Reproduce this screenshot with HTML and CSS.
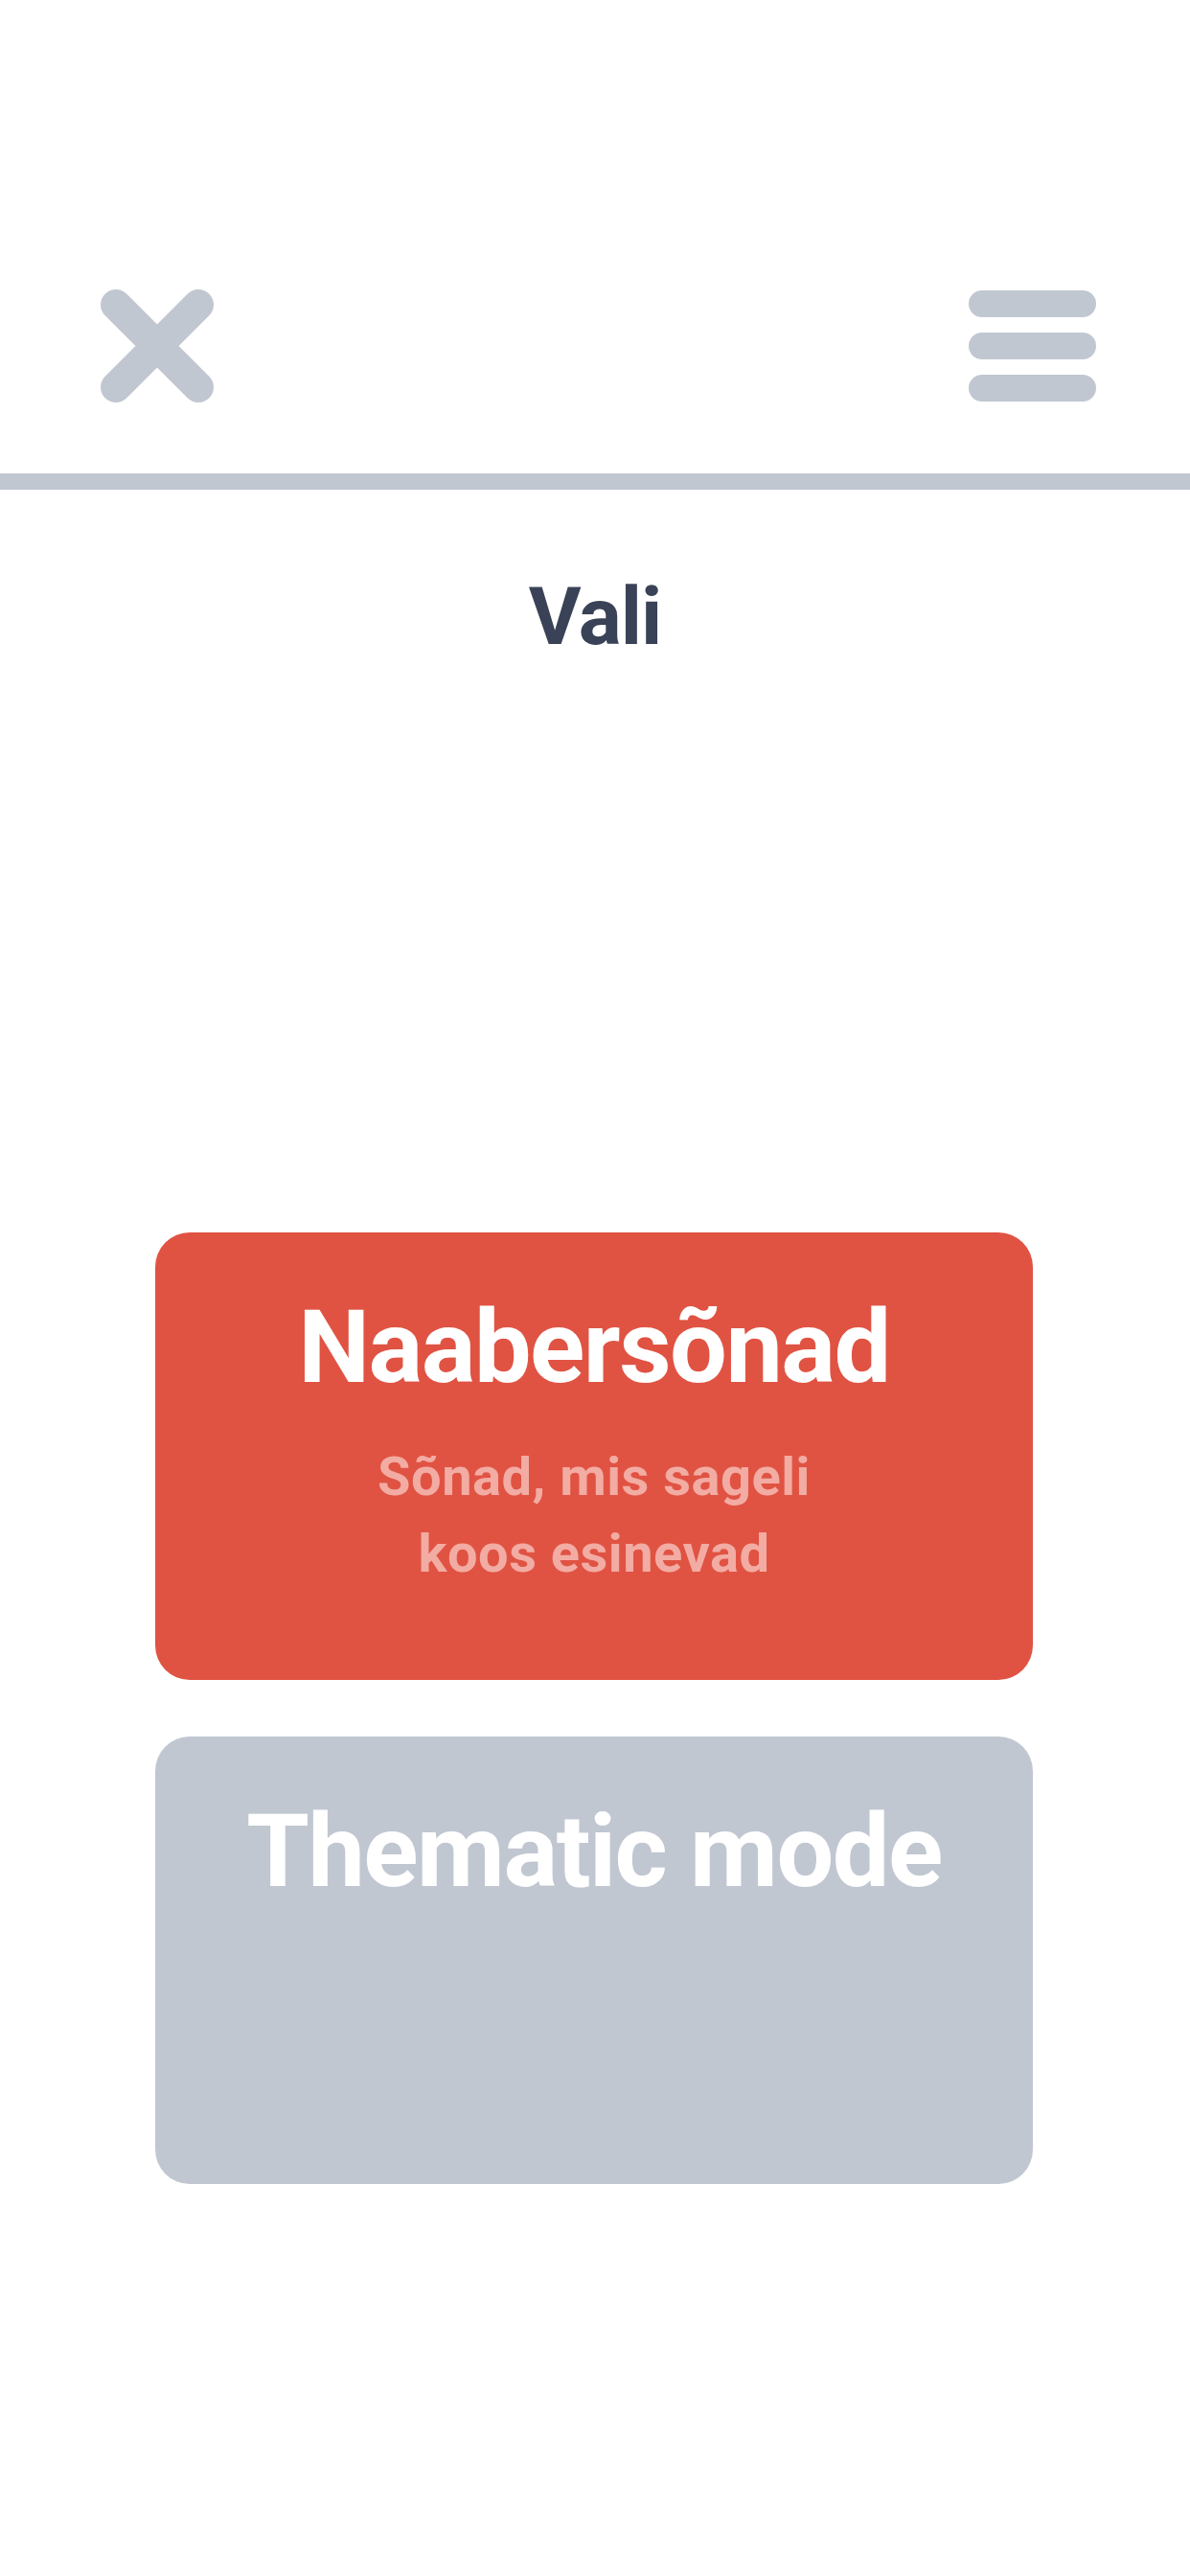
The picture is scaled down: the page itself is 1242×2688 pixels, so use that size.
FILE: index.html
```html
<!DOCTYPE html>
<html lang="et">
<head>
<meta charset="utf-8">
<title>Vali</title>
<link rel="stylesheet" href="styles.css">
</head>
<body>
<div class="page">
  <header class="topbar">
    <button class="icon-btn close" aria-label="Sulge">
      <svg width="118" height="118" viewBox="0 0 118 118">
        <path d="M16 16 L102 102 M102 16 L16 102" stroke="#c1c7d1" stroke-width="32" stroke-linecap="round" fill="none"/>
      </svg>
    </button>
    <button class="icon-btn menu" aria-label="Menüü">
      <span class="bar"></span>
      <span class="bar"></span>
      <span class="bar"></span>
    </button>
  </header>
  <div class="divider"></div>
  <h1 class="heading">Vali</h1>
  <main class="cards">
    <div class="card card-active">
      <div class="card-title">Naabersõnad</div>
      <div class="card-sub">Sõnad, mis sageli<br>koos esinevad</div>
    </div>
    <div class="card card-disabled">
      <div class="card-title">Thematic mode</div>
    </div>
  </main>
</div>
</body>
</html>
```
FILE: styles.css
```css
html, body {
  margin: 0;
  padding: 0;
  background: #ffffff;
}
body {
  font-family: Roboto, "Noto Sans", "Liberation Sans", sans-serif;
  width: 1242px;
  height: 2688px;
  overflow: hidden;
}
.page {
  display: flex;
  flex-direction: column;
}
.topbar {
  display: flex;
  justify-content: space-between;
  align-items: flex-start;
  padding: 303px 98px 0 105px;
}
.icon-btn {
  border: 0;
  background: none;
  padding: 0;
  margin: 0;
  display: block;
}
.close svg {
  display: block;
  width: 118px;
  height: 118px;
  margin-top: -1px;
}
.menu {
  display: flex;
  flex-direction: column;
  gap: 16px;
  width: 133px;
}
.bar {
  display: block;
  height: 28px;
  border-radius: 14px;
  background: #c1c7d1;
}
.divider {
  margin-top: 74px;
  height: 17px;
  background: #c1c7d1;
}
.heading {
  margin: 91px 0 0;
  font-size: 84px;
  line-height: 1;
  font-weight: 700;
  text-align: center;
  color: #394256;
  letter-spacing: -1px;
}
.cards {
  display: flex;
  flex-direction: column;
  gap: 59px;
  padding: 0 164px 0 162px;
  margin-top: 600px;
}
.card {
  height: 467px;
  border-radius: 36px;
  box-sizing: border-box;
  padding-top: 67px;
  display: flex;
  flex-direction: column;
  align-items: center;
  text-align: center;
}
.card-active {
  background: #e05343;
}
.card-disabled {
  background: #c1c7d1;
}
.card-title {
  font-size: 106px;
  line-height: 1;
  font-weight: 700;
  color: #ffffff;
  letter-spacing: -1.5px;
}
.card-sub {
  margin-top: 42px;
  font-size: 56px;
  line-height: 80px;
  font-weight: 700;
  color: #f2aca3;
  letter-spacing: 0.5px;
}
```
